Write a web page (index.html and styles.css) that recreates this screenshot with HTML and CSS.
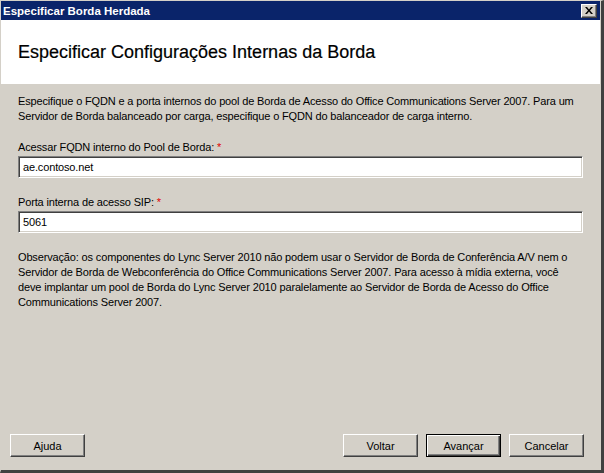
FILE: index.html
```html
<!DOCTYPE html>
<html lang="pt">
<head>
<meta charset="utf-8">
<title>Especificar Borda Herdada</title>
<link rel="stylesheet" href="styles.css">
</head>
<body>
<div class="window">
  <div class="titlebar">
    <span class="title">Especificar Borda Herdada</span>
    <span class="close"><svg width="8" height="7" viewBox="0 0 8 7"><path d="M0 0h2l2 2.5L6 0h2L5 3.5 8 7H6L4 4.5 2 7H0l3-3.5z" fill="#000"/></svg></span>
  </div>
  <div class="header">
    <h1>Especificar Configurações Internas da Borda</h1>
  </div>
  <div class="content">
    <p class="intro">Especifique o FQDN e a porta internos do pool de Borda de Acesso do Office Communications Server 2007. Para um Servidor de Borda balanceado por carga, especifique o FQDN do balanceador de carga interno.</p>
    <div class="field">
      <label class="label">Acessar FQDN interno do Pool de Borda: <span class="req">*</span></label>
      <div class="input">ae.contoso.net</div>
    </div>
    <div class="field second">
      <label class="label">Porta interna de acesso SIP: <span class="req">*</span></label>
      <div class="input">5061</div>
    </div>
    <p class="note">Observação: os componentes do Lync Server 2010 não podem usar o Servidor de Borda de Conferência A/V nem o Servidor de Borda de Webconferência do Office Communications Server 2007. Para acesso à mídia externa, você deve implantar um pool de Borda do Lync Server 2010 paralelamente ao Servidor de Borda de Acesso do Office Communications Server 2007.</p>
  </div>
  <div class="footer">
    <button class="btn">Ajuda</button>
    <div class="spacer"></div>
    <button class="btn">Voltar</button>
    <button class="btn default">Avançar</button>
    <button class="btn">Cancelar</button>
  </div>
</div>
</body>
</html>
```
FILE: styles.css
```css
* { box-sizing: border-box; }
html, body { margin: 0; padding: 0; background: #d4d0c8; }
body { font-family: "Liberation Sans", Arial, sans-serif; font-size: 11px; color: #000; }
.window {
  width: 604px; height: 473px;
  display: flex; flex-direction: column;
  background: #d4d0c8;
  border-left: 1px solid #d4d0c8;
  border-top: 1px solid #d4d0c8;
  border-right: 3px solid #404040;
  border-bottom: 3px solid #404040;
  box-shadow: inset -1px -1px 0 #d4d0c8;
}
.titlebar {
  height: 19px;
  background: #0a246a;
  color: #fff;
  display: flex; align-items: center; justify-content: space-between;
  padding: 0 3px 0 2px;
  margin-right: 1px;
}
.title { font-weight: bold; font-size: 11.5px; }
.close {
  width: 16px; height: 14px;
  background: #d4d0c8;
  display: flex; align-items: center; justify-content: center;
  border-top: 1px solid #fff; border-left: 1px solid #fff;
  border-right: 1px solid #404040; border-bottom: 1px solid #404040;
  box-shadow: inset -1px -1px 0 #808080;
}
.header {
  height: 64px; background: #fff;
  display: flex; align-items: center;
  padding: 0 17px;
  margin-right: 1px;
}
.header h1 { margin: 0; font-weight: normal; font-size: 18px; color: #000; padding-top: 1px; -webkit-text-stroke: 0.2px #000; }
.content { padding: 10px 18px 0 17px; letter-spacing: -0.15px; }
.intro, .note { margin: 0; line-height: 15px; }
.field { margin-top: 16px; }
.field.second { margin-top: 17px; }
.label { display: block; line-height: 15px; margin-bottom: 1px; }
.req { color: #e00000; }
.input {
  height: 22px;
  background: #fff;
  border-top: 1px solid #808080; border-left: 1px solid #808080;
  border-right: 1px solid #fff; border-bottom: 1px solid #fff;
  box-shadow: inset 1px 1px 0 #404040, inset -1px -1px 0 #d4d0c8;
  padding: 3px 4px;
  line-height: 15px;
}
.note { margin-top: 17px; }
.footer {
  margin-top: auto;
  display: flex; gap: 8px;
  padding: 0 17px 13px 9px;
}
.spacer { flex: 1; }
.btn {
  width: 75px; height: 23px;
  font-family: "Liberation Sans", Arial, sans-serif; font-size: 11px; color: #000;
  background: #d4d0c8;
  border-top: 1px solid #fff; border-left: 1px solid #fff;
  border-right: 1px solid #404040; border-bottom: 1px solid #404040;
  box-shadow: inset -1px -1px 0 #808080;
  padding: 0;
}
.btn.default {
  border: 1px solid #000;
  box-shadow: inset 1px 1px 0 #fff, inset -1px -1px 0 #404040, inset -2px -2px 0 #808080;
}
```
